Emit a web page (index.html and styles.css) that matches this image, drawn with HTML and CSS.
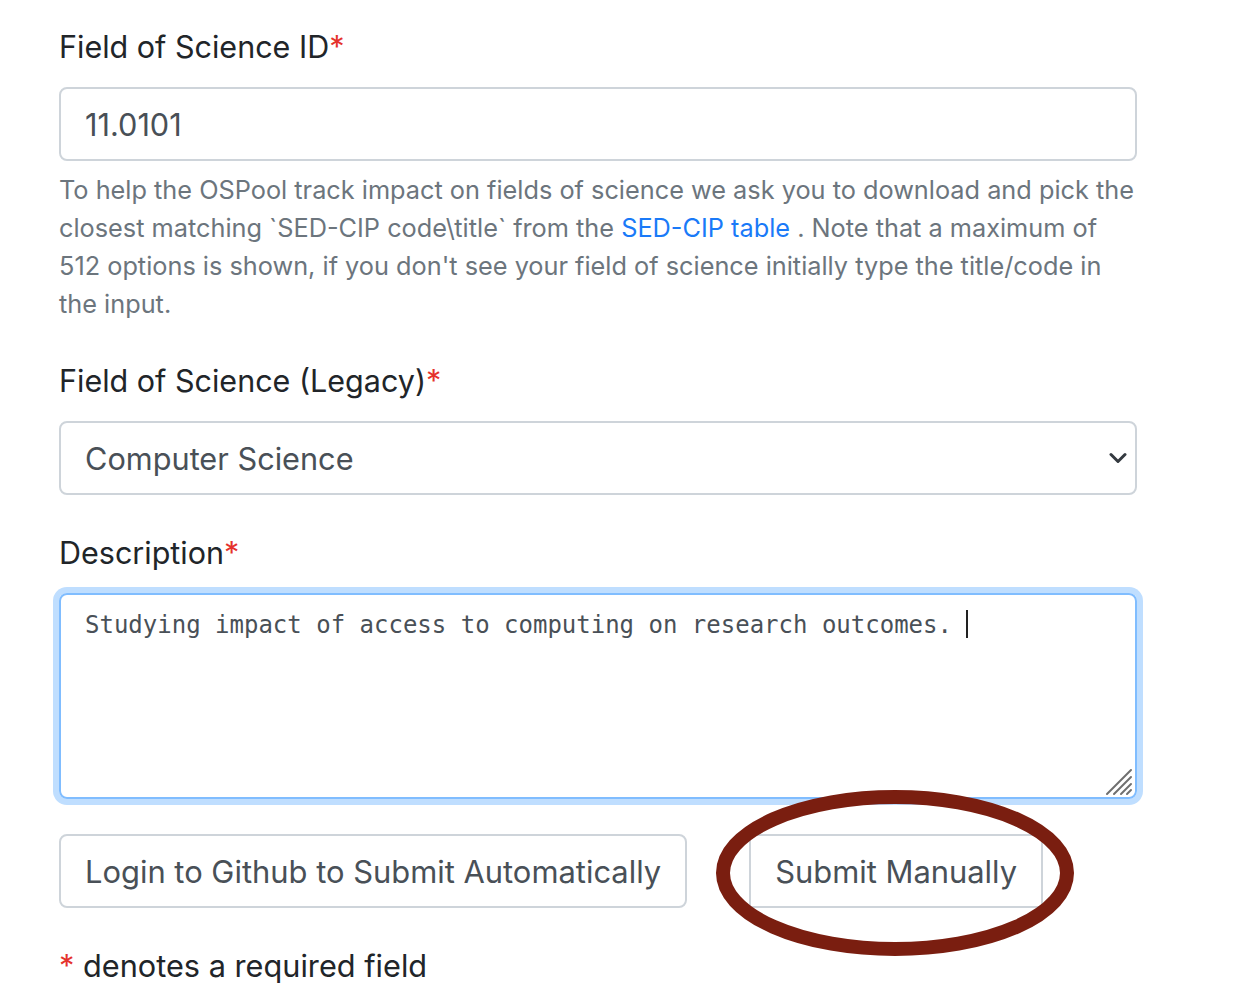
FILE: index.html
```html
<!DOCTYPE html>
<html lang="en">
<head>
<meta charset="utf-8">
<title>Field of Science</title>
<link rel="stylesheet" href="styles.css">
</head>
<body>
<form class="form">
  <div class="group">
    <label class="label" for="fos-id">Field of Science ID<span class="req">*</span></label>
    <input class="control" id="fos-id" type="text" value="11.0101">
    <p class="help">To help the OSPool track impact on fields of science we ask you to download and pick the<br>closest matching `SED-CIP code\title` from the <a class="link" href="#">SED-CIP table</a> . Note that a maximum of<br>512 options is shown, if you don't see your field of science initially type the title/code in<br>the input.</p>
  </div>
  <div class="group">
    <label class="label" for="fos-legacy">Field of Science (Legacy)<span class="req">*</span></label>
    <div class="select-wrap">
      <select class="control select" id="fos-legacy">
        <option>Computer Science</option>
      </select>
      <svg class="chevron" width="18" height="12" viewBox="0 0 18 12"><path d="M2 2.5l7 7 7-7" fill="none" stroke="#343a40" stroke-width="3" stroke-linecap="round" stroke-linejoin="round"/></svg>
    </div>
  </div>
  <div class="group">
    <label class="label">Description<span class="req">*</span></label>
    <div class="textarea" role="textbox" aria-multiline="true">Studying impact of access to computing on research outcomes. <span class="caret"></span>
      <svg class="grip" width="28" height="28" viewBox="0 0 28 28"><g stroke="#6f6f6f" stroke-width="2" stroke-linecap="round"><path d="M2 26L26 2"/><path d="M9 26L26 9"/><path d="M16 26L26 16"/><path d="M22 26L26 22"/></g></svg>
    </div>
  </div>
  <div class="actions">
    <button class="btn" type="button">Login to Github to Submit Automatically</button>
    <div class="circled">
      <button class="btn" type="button">Submit Manually</button>
      <svg class="oval" width="370" height="178" viewBox="0 0 370 178"><ellipse cx="185" cy="89" rx="172" ry="76" fill="none" stroke="#7a1e10" stroke-width="14"/></svg>
    </div>
  </div>
  <p class="note"><span class="req">*</span> denotes a required field</p>
</form>
</body>
</html>
```
FILE: styles.css
```css
html, body {
  margin: 0;
  padding: 0;
  background: #ffffff;
}
body {
  font-family: Inter, "Liberation Sans", sans-serif;
  color: #212529;
}
.form {
  width: 1078px;
  padding: 24px 0 0 59px;
}
.group {
  margin-bottom: 35px;
}
.label {
  display: block;
  font-size: 30.5px;
  line-height: 46px;
  margin-bottom: 17px;
  color: #212529;
}
.req {
  color: #e5322d;
}
.control {
  display: block;
  box-sizing: border-box;
  width: 100%;
  height: 74px;
  margin: 0;
  padding: 0 24px;
  border: 2px solid #ced4da;
  border-radius: 8px;
  background: #ffffff;
  font-family: inherit;
  font-size: 30.7px;
  color: #495057;
  outline: none;
}
.help {
  margin: 10px 0 0;
  font-size: 25.3px;
  line-height: 38px;
  color: #6c757d;
  white-space: nowrap;
}
.link {
  color: #1a7af8;
  text-decoration: none;
}
.select-wrap {
  position: relative;
}
.select {
  appearance: none;
  -webkit-appearance: none;
  padding-right: 64px;
}
.chevron {
  position: absolute;
  right: 10px;
  top: 31px;
  pointer-events: none;
}
.textarea {
  position: relative;
  box-sizing: border-box;
  height: 206px;
  padding: 13px 24px;
  border: 2px solid #80bdff;
  border-radius: 8px;
  box-shadow: 0 0 0 6px #bfdeff;
  font-family: "DejaVu Sans Mono", "Liberation Mono", monospace;
  font-size: 24px;
  line-height: 35px;
  color: #495057;
  white-space: pre-wrap;
}
.caret {
  display: inline-block;
  width: 2px;
  height: 28px;
  background: #222222;
  vertical-align: -5px;
}
.grip {
  position: absolute;
  right: 2px;
  bottom: 1px;
}
.actions {
  display: flex;
  gap: 62px;
  margin-bottom: 35px;
}
.circled {
  position: relative;
}
.btn {
  box-sizing: border-box;
  height: 74px;
  padding: 0 24px;
  border: 2px solid #ced4da;
  border-radius: 8px;
  background: #ffffff;
  font-family: inherit;
  font-size: 30.9px;
  color: #495057;
}
.circled .btn {
  border-radius: 0;
}
.oval {
  position: absolute;
  left: 50%;
  top: 50%;
  margin-left: -186px;
  margin-top: -87px;
  pointer-events: none;
}
.note {
  margin: 0;
  font-size: 30.7px;
  line-height: 46px;
  color: #212529;
}
```
